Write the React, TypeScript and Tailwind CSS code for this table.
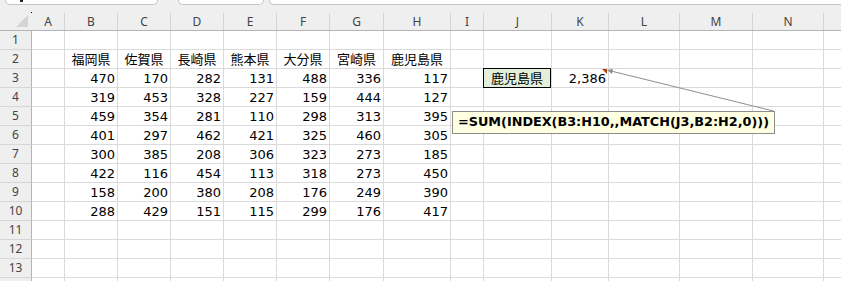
import React from "react";

// column widths include the 1px right gridline
const columns = [
  { key: "A", w: "w-[33px]" },
  { key: "B", w: "w-[53px]" },
  { key: "C", w: "w-[53px]" },
  { key: "D", w: "w-[53px]" },
  { key: "E", w: "w-[53px]" },
  { key: "F", w: "w-[53px]" },
  { key: "G", w: "w-[54px]" },
  { key: "H", w: "w-[67px]" },
  { key: "I", w: "w-[33px]" },
  { key: "J", w: "w-[68px]" },
  { key: "K", w: "w-[57px]" },
  { key: "L", w: "w-[71px]" },
  { key: "M", w: "w-[73px]" },
  { key: "N", w: "w-[71px]" },
];

const prefectures = ["福岡県", "佐賀県", "長崎県", "熊本県", "大分県", "宮崎県", "鹿児島県"];

const sales = [
  [470, 170, 282, 131, 488, 336, 117],
  [319, 453, 328, 227, 159, 444, 127],
  [459, 354, 281, 110, 298, 313, 395],
  [401, 297, 462, 421, 325, 460, 305],
  [300, 385, 208, 306, 323, 273, 185],
  [422, 116, 454, 113, 318, 273, 450],
  [158, 200, 380, 208, 176, 249, 390],
  [288, 429, 151, 115, 299, 176, 417],
];

type Cell = { text?: string; align?: "left" | "center" | "right"; label?: boolean };

function cellFor(row: number, col: number): Cell {
  // col 0 = A
  if (row === 2 && col >= 1 && col <= 7) return { text: prefectures[col - 1], align: "center" };
  if (row >= 3 && row <= 10 && col >= 1 && col <= 7)
    return { text: String(sales[row - 3][col - 1]), align: "right" };
  if (row === 3 && col === 9) return { text: "鹿児島県", align: "center", label: true };
  if (row === 3 && col === 10) {
    const total = sales.reduce((s, r) => s + r[6], 0);
    return { text: total.toLocaleString("en-US"), align: "right" };
  }
  return {};
}

const GridRow = ({ row, showLabel = true }: { row: number; showLabel?: boolean }) => (
  <div className="flex h-[19px] shrink-0">
    <div className="w-[32px] shrink-0 border-r border-b border-r-[#b4b4b4] border-b-[#d6d6d6] bg-[#efefef] flex items-center justify-center text-[12px] text-[#444] font-['Noto_Sans',sans-serif] leading-none">
      {showLabel ? row : null}
    </div>
    {columns.map((c, i) => {
      const cell = cellFor(row, i);
      return (
        <div
          key={c.key}
          className={`${c.w} shrink-0 relative border-r border-b border-[#dadada] flex items-center px-[2px] text-[13px] leading-none text-black ${
            cell.align === "right" ? "justify-end" : cell.align === "center" ? "justify-center" : "justify-start"
          }`}
        >
          {cell.label ? (
            <div className="absolute -left-px -top-px w-[68px] h-[20px] border border-black bg-[#e2efda] flex items-center justify-center">
              {cell.text}
            </div>
          ) : (
            cell.text
          )}
        </div>
      );
    })}
    <div className="flex-1 border-b border-[#dadada]" />
  </div>
);

export default function App() {
  const rows = Array.from({ length: 13 }, (_, i) => i + 1);

  return (
    <div className="relative w-[841px] h-[281px] overflow-hidden bg-white font-['DejaVu_Sans','Noto_Sans_CJK_JP',sans-serif]">
      {/* formula bar boxes peeking in at the top */}
      <div className="flex h-[5px] bg-[#efefef]">
        <div className="relative ml-[5px] w-[153px] h-[5px] bg-white border border-t-0 border-[#c4c4c4] rounded-b-[5px]">
          <div className="absolute left-[14px] top-0 w-[3px] h-[2px] bg-[#222]" />
        </div>
        <div className="ml-[20px] w-[86px] h-[5px] bg-white border border-t-0 border-[#c4c4c4] rounded-b-[5px]" />
        <div className="ml-[5px] flex-1 h-[5px] bg-white border border-t-0 border-r-0 border-[#c4c4c4] rounded-bl-[5px]" />
      </div>

      {/* column headers */}
      <div className="flex h-[26px] bg-[#efefef] border-b border-[#b4b4b4]">
        <div className="relative w-[32px] shrink-0">
          <div className="absolute left-[31px] top-[7px] w-px h-px bg-black" />
          <svg className="absolute left-[16px] top-[10px]" width="13" height="13" viewBox="0 0 13 13">
            <polygon points="12,0 12,12 0,12" fill="#d4d4d4" />
          </svg>
        </div>
        {columns.map((c) => (
          <div key={c.key} className={`${c.w} shrink-0 flex flex-col`}>
            <div className="h-[8px]" />
            <div className="flex-1 border-r border-[#d4d4d4] flex items-center justify-center text-[12px] leading-none text-[#444] font-['Noto_Sans',sans-serif]">
              {c.key}
            </div>
          </div>
        ))}
        <div className="flex-1" />
      </div>

      {rows.map((r) => (
        <GridRow key={r} row={r} />
      ))}
      {/* next row, mostly below the fold */}
      <GridRow row={14} showLabel={false} />

      {/* comment indicator and callout arrow */}
      <svg className="absolute left-0 top-0 pointer-events-none" width="841" height="281">
        <polygon points="602,69 607,69 607,74" fill="#b4410e" />
        <line x1="773.5" y1="111" x2="611" y2="71" stroke="#8e8e8e" strokeWidth="1" />
        <polygon points="607,70 613,69 612,74" fill="#8e8e8e" />
      </svg>

      {/* comment box */}
      <div className="absolute left-[452px] top-[111px] w-[323px] h-[23px] bg-[#ffffe1] border border-[#8c8c8c] flex items-center pl-[5px] text-[12.8px] font-bold leading-none text-black">
        =SUM(INDEX(B3:H10,,MATCH(J3,B2:H2,0)))
      </div>
    </div>
  );
}
